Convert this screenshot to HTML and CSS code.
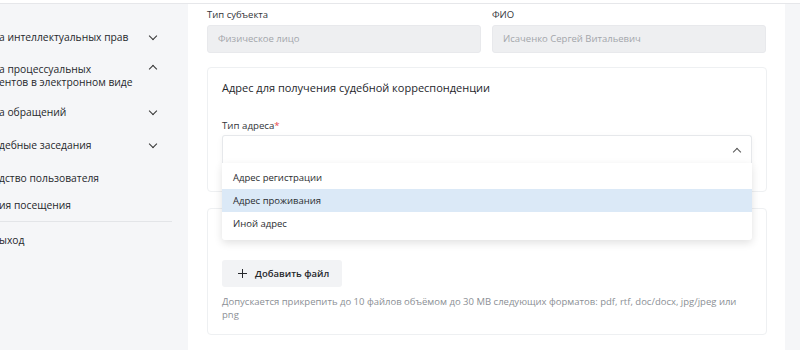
FILE: index.html
```html
<!DOCTYPE html>
<html>
<head>
    <meta charset="UTF-8">
    <title></title>
    <link rel="stylesheet" href="styles.css">
</head>
<body>
    <div class="topline"></div>
    <div class="layout">
        <div class="side">
            <ul class="menu">
                <li class="item"><span>а интеллектуальных прав</span><i class="chev down"></i></li>
                <li class="item two"><span>а процессуальных<br>ентов в электронном виде</span><i class="chev up"></i></li>
                <li class="item"><span>а обращений</span><i class="chev down"></i></li>
                <li class="item"><span>дебные заседания</span><i class="chev down"></i></li>
                <li class="item"><span>дство пользователя</span></li>
                <li class="item short"><span>ия посещения</span></li>
            </ul>
            <div class="sep"></div>
            <div class="item exit"><span>ыход</span></div>
        </div>
        <div class="main">
            <div class="fields">
                <div class="field">
                    <label>Тип субъекта</label>
                    <div class="input">Физическое лицо</div>
                </div>
                <div class="field">
                    <label>ФИО</label>
                    <div class="input">Исаченко Сергей Витальевич</div>
                </div>
            </div>
            <div class="card addr">
                <h3>Адрес для получения судебной корреспонденции</h3>
                <label>Тип адреса<em>*</em></label>
                <div class="select-wrap">
                    <div class="select"><i class="chev up"></i></div>
                    <ul class="dropdown">
                        <li>Адрес регистрации</li>
                        <li class="hover">Адрес проживания</li>
                        <li>Иной адрес</li>
                    </ul>
                </div>
            </div>
            <div class="card files">
                <a href="javascript:;" class="btn"><b class="plus"></b>Добавить файл</a>
                <p class="hint">Допускается прикрепить до 10 файлов объёмом до 30 MB следующих форматов: pdf, rtf, doc/docx, jpg/jpeg или png</p>
            </div>
        </div>
        <div class="gutter"></div>
    </div>
</body>
</html>
```

FILE: styles.css
```css
*{margin: 0;padding: 0;list-style: none;box-sizing: border-box;}
body{
    font-family: "Open Sans", "Noto Sans", sans-serif;
    color: #26282c;
    background: #fff;
    width: 800px;
    height: 350px;
    overflow: hidden;
}
.topline{
    height: 4px;
    border-bottom: 1px solid #e6e7ea;
}
.layout{
    display: flex;
    height: 346px;
}
.side{
    width: 188px;
    background: #f5f6f8;
    padding-top: 17px;
    overflow: hidden;
}
.item{
    display: flex;
    justify-content: space-between;
    align-items: center;
    font-size: 10.3px;
    line-height: 13px;
    width: 164px;
    margin-left: -1px;
}
.menu .item{
    height: 33px;
}
.menu .item.two{
    height: 42px;
    align-items: flex-start;
    padding-top: 9px;
}
.menu .item.short{
    height: 21px;
}
.chev{
    width: 6px;
    height: 6px;
    border-right: 1.3px solid #333;
    border-bottom: 1.3px solid #333;
    margin-right: 7px;
}
.chev.down{
    transform: rotate(45deg);
    margin-top: -3px;
}
.chev.up{
    transform: rotate(-135deg);
    margin-top: 3px;
}
.sep{
    width: 172px;
    height: 1px;
    background: #e3e5e8;
    margin-top: 5px;
}
.item.exit{
    height: 36px;
}
.main{
    flex: 1;
    padding: 5px 18px 0 19px;
}
.fields{
    display: grid;
    grid-template-columns: 274px 274px;
    gap: 11px;
}
label{
    display: block;
    font-size: 9.5px;
    line-height: 12px;
    color: #33353a;
}
label em{
    font-style: normal;
    color: #e5484d;
}
.input{
    margin-top: 4px;
    height: 28px;
    border-radius: 3px;
    background: #eeeff1;
    border: 1px solid #e8e9ec;
    font-size: 9.5px;
    line-height: 26px;
    padding-left: 10px;
    color: #a3a6ab;
}
.card{
    border: 1px solid #eef0f2;
    border-radius: 4px;
    width: 560px;
}
.addr{
    margin-top: 14px;
    height: 125px;
    padding: 11px 14px 0;
}
.addr h3{
    font-size: 11px;
    font-weight: normal;
    line-height: 18px;
    color: #25272b;
    margin-bottom: 22px;
}
.addr label{
    font-size: 9.7px;
    line-height: 14px;
}
.select-wrap{
    position: relative;
    margin-top: 2px;
}
.select{
    height: 29px;
    border: 1px solid #e6e8eb;
    border-bottom: none;
    border-radius: 3px 3px 0 0;
    display: flex;
    justify-content: flex-end;
    align-items: center;
    padding-right: 9px;
    box-shadow: 0 2px 6px rgba(0,0,0,.05);
}
.select .chev{
    width: 6px;
    height: 6px;
    border-color: #555;
    margin-right: 2px;
}
.dropdown{
    position: absolute;
    left: 0; top: 28px;
    width: 100%;
    background: #fff;
    padding: 3px 0 5px;
    box-shadow: 0 3px 8px rgba(0,0,0,.12);
    border-radius: 0 0 3px 3px;
    z-index: 2;
}
.dropdown li{
    height: 23px;
    line-height: 23px;
    font-size: 9.5px;
    padding-left: 11px;
    color: #2a2c30;
}
.dropdown li.hover{
    background: #dbe9f7;
}
.files{
    margin-top: 16px;
    height: 127px;
    padding: 51px 14px 0;
}
.btn{
    display: inline-flex;
    align-items: center;
    height: 27px;
    width: 120px;
    padding-left: 16px;
    background: #f2f3f5;
    border-radius: 3px;
    font-size: 9.5px;
    font-weight: 600;
    color: #26282c;
    text-decoration: none;
}
.plus{
    position: relative;
    width: 9px;
    height: 9px;
    margin-right: 8px;
}
.plus:before,.plus:after{
    content: '';
    position: absolute;
    background: #26282c;
}
.plus:before{
    left: 0; top: 3.75px;
    width: 9px;
    height: 1.5px;
}
.plus:after{
    left: 3.75px; top: 0;
    width: 1.5px;
    height: 9px;
}
.hint{
    margin-top: 8px;
    font-size: 9.5px;
    line-height: 13px;
    color: #8b8f95;
    width: 531px;
}
.gutter{
    width: 15px;
    background: #f5f6f8;
}
```
